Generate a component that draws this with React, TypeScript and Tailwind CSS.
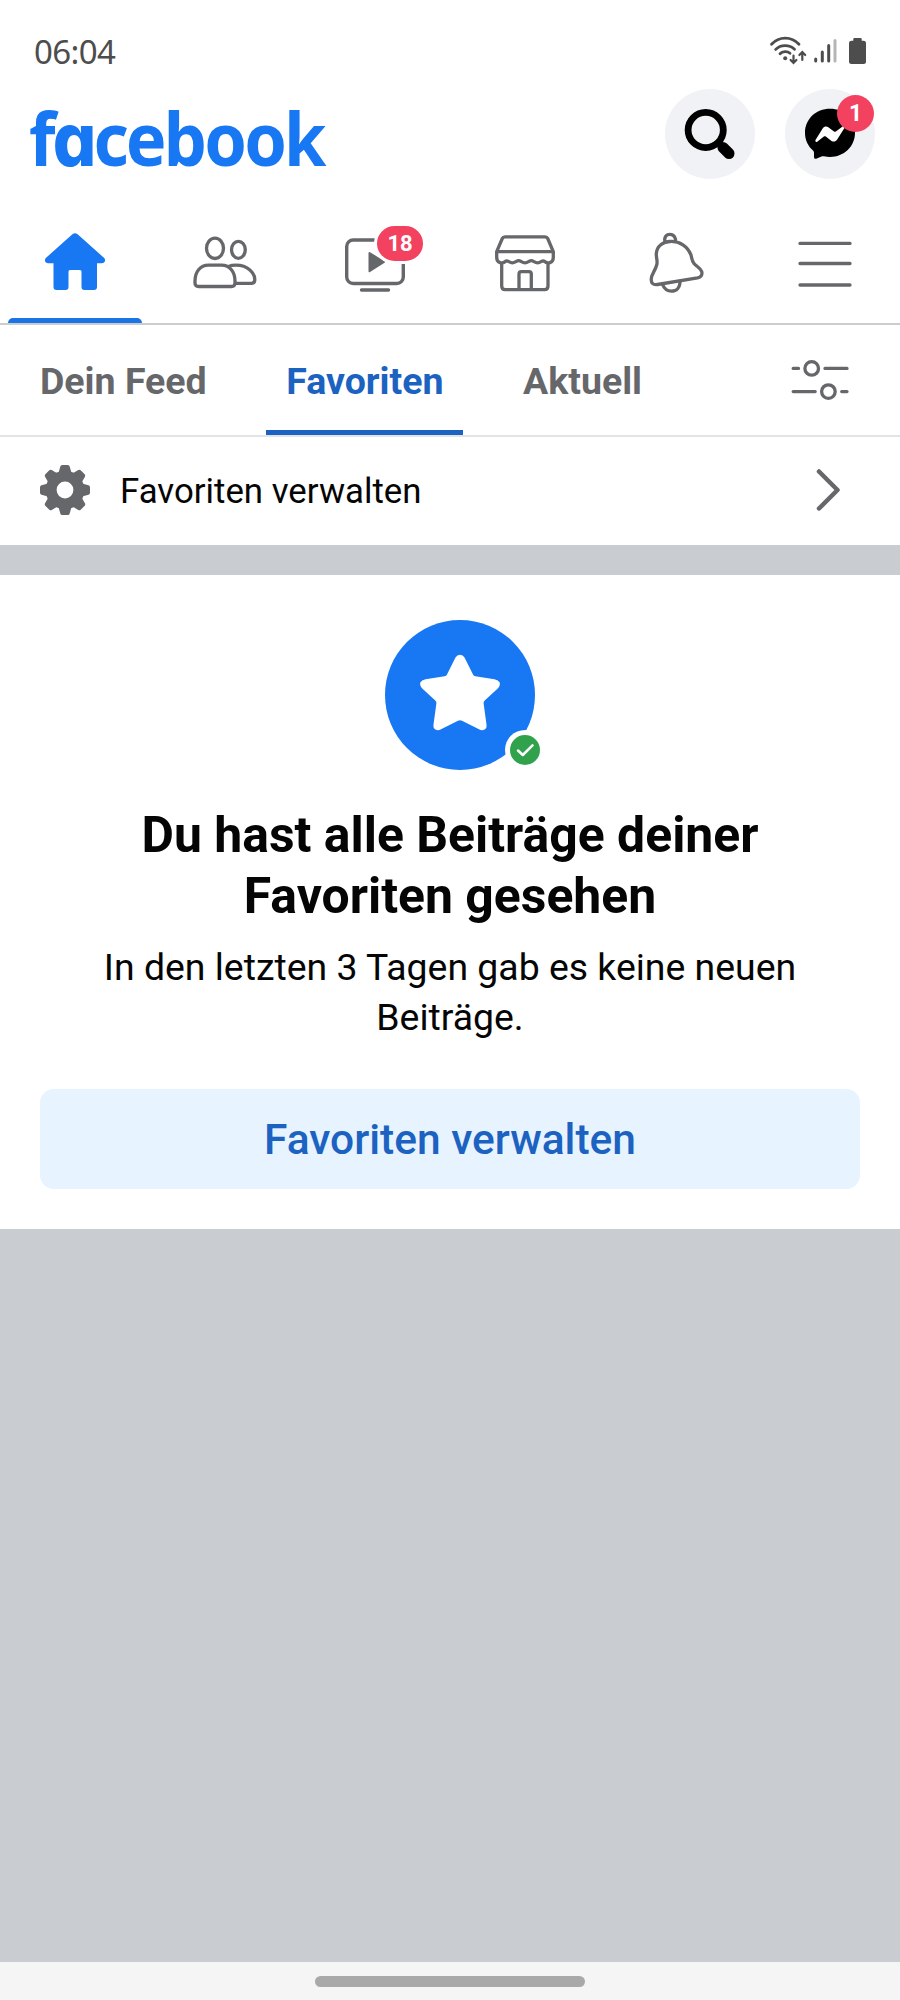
import { useState } from "react";

const feedTabs = ["Dein Feed", "Favoriten", "Aktuell"];

function StatusBar() {
  return (
    <div className="flex h-[72px] items-start justify-between pl-[34px] pr-[34px] pt-[29px] text-[#4d4d4d]">
      <span className="font-['Noto_Sans',sans-serif] text-[33px] leading-[45px] tracking-[-0.6px]">06:04</span>
      <div className="flex pt-[5px]">
        <svg className="h-8 w-11" viewBox="0 0 44 32" fill="none" stroke="currentColor" strokeWidth="2.8" strokeLinecap="round">
          <path d="M3.500 10.200C11 2 23.500 2 31 10.200M7.700 15.400C12.500 10.400 21.500 10.400 26.500 15.200M12 19.800C14.500 17 19.500 17 22 19.300" />
          <circle cx="17.200" cy="24.200" r="2" fill="currentColor" stroke="none" />
          <path d="M25.500 21.500V28M22.600 26L25.500 29L28.400 26M34.300 26V19M31.400 21L34.300 18L37.200 21" strokeWidth="2.200" />
        </svg>
        <svg className="h-8 w-7" viewBox="0 0 28 32" stroke="currentColor" strokeWidth="3" strokeLinecap="round">
          <path d="M3.700 25V27M10.300 18V27M16.700 11.500V27" />
          <path d="M23 6.500V27" stroke="#b5b5b5" />
        </svg>
        <svg className="ml-[9px] h-8 w-[17px]" viewBox="0 0 17 32" fill="currentColor">
          <rect x="4.300" y="4" width="8.400" height="5" rx="1" />
          <rect x="0" y="6.700" width="17" height="23.300" rx="2.500" />
        </svg>
      </div>
    </div>
  );
}

function SearchIcon() {
  return (
    <svg className="h-[90px] w-[90px]" viewBox="0 0 90 90" fill="none" stroke="#000">
      <circle cx="40.700" cy="41" r="17.600" strokeWidth="6.800" />
      <path d="M52 52L56.500 57.500" strokeWidth="5" />
      <path d="M58 58.500L64 64.500" strokeWidth="11" strokeLinecap="round" />
    </svg>
  );
}

function MessengerIcon() {
  return (
    <svg className="h-[90px] w-[90px]" viewBox="0 0 90 90">
      <path d="M45 19.700C31 19.700 20 30 20 43.800C20 51 23 57.200 28 61.500C28.700 62.200 29 63 29 63.800V68C29 69.600 30.400 70.300 31.800 69.600L36.500 67.500C37.300 67.100 38 67.100 38.900 67.300C40.800 67.800 43 68 45 68C59 68 70 57.600 70 43.800S59 19.700 45 19.700Z" fill="#000" />
      <path d="M30.500 51L37.800 39.300C39 37.400 41.500 36.900 43.300 38.200L49 42.500C49.600 42.900 50.300 42.900 50.900 42.500L57.500 37.500C58.600 36.700 60 38 59.300 39.200L52 50.800C50.800 52.700 48.300 53.200 46.500 51.900L40.800 47.600C40.200 47.200 39.500 47.200 38.900 47.600L32.200 52.700C31.100 53.500 29.800 52.200 30.500 51Z" fill="#fff" />
    </svg>
  );
}

function HomeIcon() {
  return (
    <svg className="h-16 w-16" viewBox="0 0 64 64" fill="#1877f2">
      <path d="M29.400 4.300Q32 2 34.600 4.300L61.200 28Q62.500 29.500 61.800 31.500Q61 33.200 59 33.200H54V57Q54 60 51 60H41.500Q38.500 60 38.500 57V41.500Q38.500 40 37 40H27Q25.500 40 25.500 41.500V57Q25.500 60 22.500 60H13.500Q10.500 60 10.500 57V33.200H5Q3 33.200 2.200 31.500Q1.500 29.500 2.800 28Z" />
    </svg>
  );
}

function FriendsIcon() {
  return (
    <svg className="h-16 w-16" viewBox="0 0 64 64" fill="none" stroke="#65676b" strokeWidth="3.300">
      <ellipse cx="22" cy="18.300" rx="8.500" ry="10.200" />
      <ellipse cx="45.400" cy="19.800" rx="6.900" ry="8.500" />
      <path d="M15.500 35.200H28.500C37 35.200 42 42 42 51V53Q42 56.500 38.500 56.500H5.500Q2 56.500 2 53V51C2 42 7 35.200 15.500 35.200Z" />
      <path d="M35.500 36.500Q38.500 35.200 43 35.200C55 35.200 61.800 43 61.800 49.500Q61.800 53.300 58.500 53.300H42" />
    </svg>
  );
}

function WatchIcon() {
  return (
    <svg className="h-16 w-16" viewBox="0 0 64 64" fill="none" stroke="#65676b" strokeWidth="3.400" strokeLinecap="round">
      <rect x="3.700" y="10" width="56.600" height="43.500" rx="6.500" />
      <path d="M18.500 60H45.500" />
      <path d="M26.500 23L41 32L26.500 41.200Z" fill="#65676b" strokeWidth="2" strokeLinejoin="round" />
    </svg>
  );
}

function MarketIcon() {
  return (
    <svg className="h-16 w-16" viewBox="0 0 64 64" fill="none" stroke="#65676b" strokeWidth="3.300" strokeLinejoin="round">
      <path d="M3.700 21.700L9.300 8.500Q10 6.900 12 6.900H52Q54 6.900 54.700 8.500L60.300 21.700Z" />
      <path d="M3.700 21.700V27.500C3.700 33 9.500 34.500 13 31C14.800 30.200 16.500 32.800 19.300 32.800S23.500 30.700 25.700 30.700S29 32.800 32 32.800S36 30.700 38.300 30.700S41.500 32.800 44.700 32.800S48.500 30.200 51 31C54.500 34.500 60.300 33 60.300 27.500V21.700" />
      <path d="M8.700 33V56Q8.700 59.700 12.200 59.700H51.500Q55 59.700 55 56V33" />
      <path d="M26 59.700V44Q26 41.700 28.300 41.700H36Q38.300 41.700 38.300 44V59.700" />
    </svg>
  );
}

function BellIcon() {
  return (
    <svg className="h-16 w-16" viewBox="0 0 64 64" fill="none" stroke="#65676b" strokeWidth="3.300" strokeLinejoin="round">
      <path d="M22.300 13C20.500 7.500 23 4.400 27 4.400C31 4.400 33.300 8 32.300 12" />
      <path d="M13.700 35C15 31 13 28 13.300 23.500C14 16 20 11.800 27 11.500C37 11 44.500 16.500 47.800 24.500C49 28 48.500 30.500 51 33.500C53.500 36.500 57.500 38 58.700 41.500C59.600 45 58 47.200 54.500 47.900L14.500 54.500C10 55.300 8.200 53 8.200 49.500C8.300 44 12 41.500 13.700 35Z" />
      <path d="M19.500 54.500C21.500 59.500 24.500 61.200 28.500 61.200C33.500 61.200 37 57.500 37 51.500" />
    </svg>
  );
}

function MenuIcon() {
  return (
    <svg className="h-16 w-16" viewBox="0 0 64 64" stroke="#65676b" strokeWidth="3.300" strokeLinecap="round">
      <path d="M7 13.400H57M7 33.500H57M7 55H57" />
    </svg>
  );
}

function FilterIcon() {
  return (
    <svg className="h-11 w-[60px]" viewBox="0 0 60 44" fill="none" stroke="#65676b" strokeWidth="3.300" strokeLinecap="round">
      <path d="M3.200 10.400H8.500M35 10.400H57M3.200 33.600H25.200M51.700 33.600H57" />
      <circle cx="21.700" cy="10.400" r="6.800" />
      <circle cx="38.400" cy="33.600" r="6.800" />
    </svg>
  );
}

function GearIcon() {
  return (
    <svg className="h-[50px] w-[50px]" viewBox="-25 -25 50 50" fill="#65676b">
      <circle r="19.300" />
      {[0, 45, 90, 135, 180, 225, 270, 315].map((angle) => (
        <path key={angle} transform={`rotate(${angle})`} d="M-6.500 -17L-4.700 -23.500Q-4.300 -25 -2.800 -25H2.800Q4.300 -25 4.700 -23.500L6.500 -17Z" />
      ))}
      <circle r="8.400" fill="#fff" />
    </svg>
  );
}

function StarBadge() {
  return (
    <svg className="ml-5 h-[150px] w-[170px]" viewBox="-10 0 170 150">
      <circle cx="75" cy="75" r="75" fill="#1877f2" />
      <path d="M70.500 37.500Q72 34.800 75 34.800T79.500 37.500L88 54.500Q88.700 56 90.300 56.300L109.500 59.300Q113.500 60 114.700 62.500Q115.500 66 112.500 68.700L99.700 80.500Q98.500 81.700 98.600 83.200L101.500 104.500Q102 109 98.500 110Q96 110.500 94 109.300L77 100.700Q75 99.700 73 100.700L56 109.300Q54 110.500 51.500 110Q48 109 48.500 104.500L51.400 83.200Q51.500 81.700 50.300 80.500L37.500 68.700Q34.500 66 35.300 62.500Q36.500 60 40.500 59.300L59.700 56.300Q61.300 56 62 54.500Z" fill="#fff" />
      <circle cx="140" cy="130" r="20" fill="#fff" />
      <circle cx="140" cy="130" r="15" fill="#31a24c" />
      <path d="M133 130.500L137.800 135L147.500 125.300" fill="none" stroke="#fff" strokeWidth="2.500" strokeLinecap="round" strokeLinejoin="round" />
    </svg>
  );
}

const navItems = [
  { name: "home", icon: <HomeIcon /> },
  { name: "friends", icon: <FriendsIcon /> },
  { name: "watch", icon: <WatchIcon />, badge: "18" },
  { name: "marketplace", icon: <MarketIcon /> },
  { name: "notifications", icon: <BellIcon /> },
  { name: "menu", icon: <MenuIcon /> },
];

export default function App() {
  const [activeNav, setActiveNav] = useState("home");
  const [activeTab, setActiveTab] = useState("Favoriten");

  return (
    <main className="flex h-[2000px] w-[900px] flex-col bg-[#c9ccd1] font-['Roboto',sans-serif] text-[#050505]">
      <header className="bg-white">
        <StatusBar />

        <div className="flex h-[138px] items-start justify-between pl-[29px] pr-[25px] pt-4">
          <h1 className="origin-left scale-x-[0.925] font-['Noto_Sans',sans-serif] text-[74px] font-bold leading-[99px] tracking-[-3.1px] text-[#1877f2]">
            f<span className="font-['Inter',sans-serif] font-extrabold [font-feature-settings:'cv11']">a</span>cebook
          </h1>
          <div className="flex gap-[30px]">
            <button className="mt-px h-[90px] w-[90px] rounded-full bg-[#f0f2f5]">
              <SearchIcon />
            </button>
            <button className="relative mt-px h-[90px] w-[90px] rounded-full bg-[#f0f2f5]">
              <MessengerIcon />
              <span className="absolute left-[52px] top-[6px] flex h-[37px] w-[37px] items-center justify-center rounded-full bg-[#f3425f] pt-px text-[23px] font-bold text-white">
                1
              </span>
            </button>
          </div>
        </div>

        <nav className="grid h-[115px] grid-cols-6 border-b-2 border-[#cccccc]">
          {navItems.map((item) => (
            <button
              key={item.name}
              className="relative flex flex-col items-center justify-between pt-5"
              onClick={() => setActiveNav(item.name)}
            >
              {item.icon}
              {item.badge && (
                <span className="absolute left-[74px] top-[13px] flex h-[41px] w-[52px] items-center justify-center rounded-full border-[3px] border-white bg-[#f3425f] text-[22px] font-bold text-white">
                  {item.badge}
                </span>
              )}
              {activeNav === item.name && <span className="h-[5px] w-[134px] rounded-t-[5px] bg-[#1b74e4]" />}
            </button>
          ))}
        </nav>

        <div className="flex h-28 items-stretch justify-between border-b-2 border-[#e2e3e5] pl-5 pr-[50px]">
          <div className="flex gap-[39.500px]">
            {feedTabs.map((tab) => (
              <button
                key={tab}
                className={
                  activeTab === tab
                    ? "border-b-[5px] border-[#1b62c1] px-5 pt-[7px] text-[37.500px] font-bold text-[#1b62c1]"
                    : "border-b-[5px] border-transparent px-5 pt-[7px] text-[37.500px] font-bold text-[#65676b]"
                }
                onClick={() => setActiveTab(tab)}
              >
                {tab}
              </button>
            ))}
          </div>
          <button>
            <FilterIcon />
          </button>
        </div>

        <div className="flex h-[108px] items-center pb-0.5 pl-10 pr-[58px]">
          <GearIcon />
          <span className="ml-[30px] grow pt-0.5 text-[34.800px]">Favoriten verwalten</span>
          <svg className="h-11 w-7" viewBox="0 0 28 44" fill="none" stroke="#65676b" strokeWidth="4.500" strokeLinecap="round" strokeLinejoin="round">
            <path d="M5 3.500L23.500 22L5 40.500" />
          </svg>
        </div>
      </header>

      <section className="mt-[30px] flex h-[654px] flex-col items-center bg-white px-10 pt-[45px]">
        <StarBadge />
        <h2 className="mt-[35px] text-center text-[49.900px] font-bold leading-[61px]">
          Du hast alle Beiträge deiner
          <br />
          Favoriten gesehen
        </h2>
        <p className="mt-[15px] w-[720px] text-center text-[37.400px] leading-[50px]">
          In den letzten 3 Tagen gab es keine neuen Beiträge.
        </p>
        <button className="mt-[47px] h-[100px] w-full rounded-[14px] bg-[#e7f3ff] pt-0.5 text-[42.500px] font-medium text-[#1b62c1]">
          Favoriten verwalten
        </button>
      </section>

      <footer className="mt-auto flex h-[38px] justify-center bg-[#f5f5f5] pt-[14px]">
        <div className="h-[11px] w-[270px] rounded-full bg-[#a9a9a9]" />
      </footer>
    </main>
  );
}
